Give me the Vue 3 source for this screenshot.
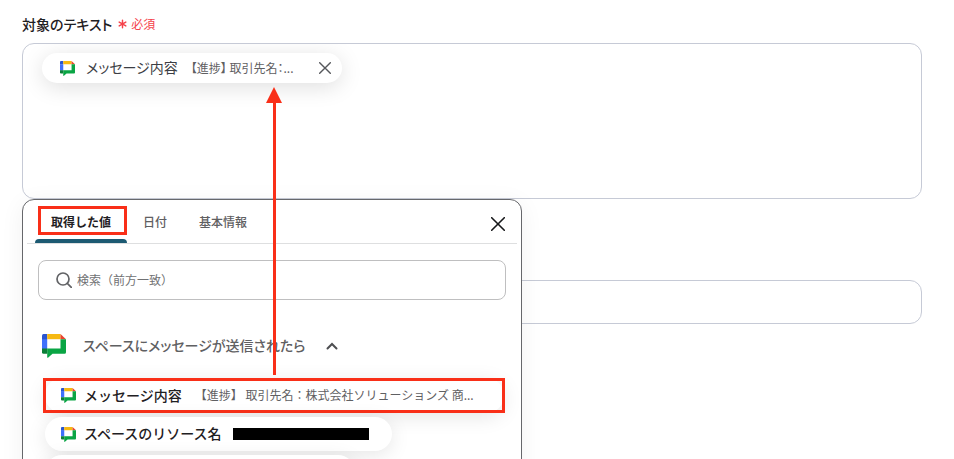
<script setup>
import { ref } from 'vue'

const tabs = ['取得した値', '日付', '基本情報']
const activeTab = ref(0)
const open = ref(true)
const search = ref('')
const body = ref('')
const other = ref('')
</script>

<template>
  <main class="page">
    <svg class="defs" width="0" height="0" aria-hidden="true">
      <symbol id="chat-logo" viewBox="0 0 24 24">
        <path fill="#3f70fb" d="M0 5h5.200v10H0Z" />
        <path fill="#2a55cf" d="M1.500 0h3.700v5.200H0V1.500Q0 0 1.500 0Z" />
        <path fill="#f6b912" d="M5.200 0H18.500v5.200H5.200Z" />
        <path fill="#e9432e" d="M18.500 0L24 5.200h-5.500Z" />
        <path fill="#0aa544" d="M18.500 5.200H24V18.300q0 1.500-1.500 1.500H10.500L6.300 23.600q-1.100.7-1.100-.7V14.600h13.300Z" />
        <path fill="#0b7f37" d="M0 14.600h5.200v5.200H1.500Q0 19.800 0 18.300Z" />
      </symbol>
    </svg>

    <section class="field">
      <label class="label" for="target">対象のテキスト<span class="required"><svg viewBox="0 0 10 10" class="star" aria-hidden="true"><path d="M5 .8v8.400M1.300 2.900l7.400 4.200M8.700 2.900L1.300 7.100" /></svg>必須</span></label>
      <div class="editor">
        <textarea id="target" v-model="body" class="editor-input"></textarea>
        <div class="chip">
          <svg class="logo"><use href="#chat-logo" /></svg>
          <span class="chip-name">メッセージ内容</span>
          <span class="chip-value">【進捗】 取引先名：...</span>
          <button class="chip-close" type="button" aria-label="削除">
            <svg viewBox="0 0 12 12"><path d="M.7.7l10.600 10.600M11.300.7L.7 11.300" /></svg>
          </button>
        </div>
      </div>

      <div class="panel">
        <nav class="tabs">
          <button
            v-for="(t, i) in tabs"
            :key="t"
            type="button"
            class="tab"
            :class="{ active: i === activeTab }"
            @click="activeTab = i"
          >{{ t }}<span v-if="i === 0" class="mark mark-tab"></span></button>
          <button class="panel-close" type="button" aria-label="閉じる">
            <svg viewBox="0 0 14 14"><path d="M.7.7l12.600 12.600M13.300.7L.7 13.300" /></svg>
          </button>
        </nav>

        <div class="search">
          <svg class="glass" viewBox="0 0 16 16"><circle cx="7" cy="7" r="6" /><path d="M11.300 11.300l4 4" /></svg>
          <input v-model="search" type="text" placeholder="検索（前方一致）" aria-label="検索">
        </div>

        <button class="group" type="button" @click="open = !open">
          <svg class="logo-large"><use href="#chat-logo" /></svg>
          <span class="group-name">スペースにメッセージが送信されたら</span>
          <svg class="chevron" viewBox="0 0 12 8"><path d="M1.500 6.500l4.500-4.500 4.500 4.500" /></svg>
        </button>

        <div v-if="open" class="values">
          <button class="value wide" type="button">
            <svg class="logo"><use href="#chat-logo" /></svg>
            <span class="value-name">メッセージ内容</span>
            <span class="value-text">【進捗】 取引先名：株式会社ソリューションズ 商...</span>
            <span class="mark mark-row"></span>
          </button>
          <button class="value" type="button">
            <svg class="logo"><use href="#chat-logo" /></svg>
            <span class="value-name">スペースのリソース名</span>
            <span class="redacted"></span>
          </button>
          <button class="value next" type="button" aria-label="次の値"></button>
        </div>
      </div>

      <div class="arrow"><span class="arrow-head"></span><span class="arrow-line"></span></div>
    </section>

    <input v-model="other" class="other" type="text" aria-label="入力">
  </main>
</template>

<style>
body {
  background: #fff;
}
</style>

<style scoped>
.page {
  box-sizing: border-box;
  height: 100vh;
  overflow: hidden;
  padding: 14px 32px 0 22px;
  font-family: "Noto Sans CJK JP", "Noto Sans", sans-serif;
  color: #1f2023;
}
.page * {
  box-sizing: border-box;
}
.defs {
  position: absolute;
}
button {
  border: 0;
  background: none;
  padding: 0;
  font: inherit;
  color: inherit;
  cursor: pointer;
}
svg path,
svg circle {
  stroke-linecap: round;
}
.field {
  position: relative;
}
.label {
  display: flex;
  align-items: center;
  height: 20px;
  margin-bottom: 9px;
  font-size: 14px;
  font-weight: 500;
  font-feature-settings: "palt";
}
.required {
  display: flex;
  align-items: center;
  gap: 4px;
  margin-left: 6px;
  padding-bottom: 2px;
  font-size: 12px;
  font-weight: 400;
  color: #f5424b;
}
.star {
  width: 9px;
  height: 10px;
  margin-top: 2px;
  fill: none;
  stroke: currentColor;
  stroke-width: 1.6;
}
.editor {
  display: grid;
  height: 156px;
  border: 1px solid #c6cad6;
  border-radius: 12px;
  overflow: hidden;
}
.editor > * {
  grid-area: 1 / 1;
}
.editor-input {
  border: 0;
  outline: 0;
  resize: none;
  background: transparent;
}
.chip {
  display: flex;
  align-items: center;
  align-self: start;
  justify-self: start;
  width: 300px;
  height: 30px;
  margin: 9px 0 0 19px;
  padding: 0 11px 0 18px;
  border-radius: 15px;
  background: #fff;
  box-shadow: 0 4px 22px rgba(0, 0, 0, 0.13);
  white-space: nowrap;
  font-feature-settings: "palt";
}
.logo {
  flex: none;
  width: 15px;
  height: 15px;
}
.chip-name,
.chip-value,
.group-name,
.value-name,
.value-text {
  padding-bottom: 2px;
}
.chip-name {
  margin-left: 11px;
  font-size: 14px;
  color: #3c3e44;
}
.chip-value {
  margin-left: 13px;
  font-size: 12px;
  color: #5f6062;
}
.chip-close {
  width: 12px;
  height: 12px;
  margin-left: auto;
}
.chip-close svg,
.panel-close svg {
  display: block;
  width: 100%;
  height: 100%;
  fill: none;
  stroke: #55575b;
  stroke-width: 1.4;
}
.panel {
  position: absolute;
  z-index: 1;
  top: 185px;
  left: 0;
  width: 500px;
  min-height: 300px;
  padding: 0 4px;
  border: 1px solid #66676b;
  border-radius: 12px;
  background: #fff;
  box-shadow: 0 4px 24px rgba(0, 0, 0, 0.06);
}
.tabs {
  display: flex;
  height: 44px;
  padding-left: 8px;
  border-bottom: 1px solid #dedfe0;
}
.tab {
  position: relative;
  padding: 4px 16px 0;
  font-size: 12px;
  font-weight: 500;
  color: #5f6062;
  border-bottom: 4px solid transparent;
}
.tab.active {
  font-weight: 700;
  color: #1f2023;
}
.tab.active::after {
  content: "";
  position: absolute;
  right: 0;
  bottom: -4px;
  left: 0;
  height: 4px;
  border-radius: 4px 4px 0 0;
  background: #1c5a72;
}
.panel-close {
  width: 14px;
  height: 14px;
  margin: 17px 12px 0 auto;
}
.panel-close svg {
  stroke: #17181a;
  stroke-width: 1.6;
}
.mark {
  position: absolute;
  border: 3px solid #f92f18;
  pointer-events: none;
}
.mark-tab {
  inset: 6px 0 4px 3px;
}
.mark-row {
  inset: 0 -1px 0 -2px;
}
.search {
  display: flex;
  align-items: center;
  gap: 5px;
  height: 40px;
  margin: 16px 11px 0;
  padding: 0 17px;
  border: 1px solid #bfbfc0;
  border-radius: 8px;
}
.glass {
  flex: none;
  width: 16px;
  height: 16px;
  fill: none;
  stroke: #626366;
  stroke-width: 1.7;
}
.search input {
  flex: 1;
  min-width: 0;
  padding: 0 0 2px;
  border: 0;
  outline: 0;
  background: transparent;
  font: inherit;
  font-size: 12px;
}
.search input::placeholder {
  color: #707173;
  opacity: 1;
}
.group {
  display: flex;
  align-items: center;
  height: 24px;
  margin: 34px 0 0 15px;
  font-size: 14px;
  font-weight: 500;
  font-feature-settings: "palt";
  color: #5f6062;
}
.logo-large {
  width: 24px;
  height: 24px;
  margin-right: 17px;
}
.chevron {
  width: 12px;
  height: 8px;
  margin-left: 20px;
  fill: none;
  stroke: #4d4e51;
  stroke-width: 2;
}
.values {
  display: flex;
  flex-direction: column;
  align-items: flex-start;
  gap: 4px;
  margin: 20px 0 0 18px;
}
.value {
  position: relative;
  display: flex;
  align-items: center;
  width: 347px;
  height: 34px;
  padding-left: 16px;
  border-radius: 17px;
  background: #fff;
  box-shadow: 0 4px 20px rgba(0, 0, 0, 0.1);
  white-space: nowrap;
}
.value.wide {
  width: 459px;
  height: 35px;
}
.value.next {
  width: 310px;
}
.value-name {
  margin-left: 8px;
  font-size: 14px;
  font-weight: 500;
}
.value-text {
  margin-left: 13px;
  font-size: 12px;
  color: #5f6062;
}
.redacted {
  width: 136px;
  height: 12px;
  margin-left: 11px;
  background: #000;
}
.arrow {
  position: absolute;
  z-index: 2;
  top: 73px;
  left: 244px;
  display: flex;
  flex-direction: column;
  align-items: center;
  width: 16px;
  height: 288px;
  pointer-events: none;
}
.arrow-head {
  width: 16px;
  height: 16px;
  background: #f92f18;
  clip-path: polygon(50% 0, 100% 100%, 0 100%);
}
.arrow-line {
  flex: 1;
  width: 3px;
  background: #f92f18;
}
.other {
  display: block;
  width: 100%;
  height: 44px;
  margin-top: 81px;
  padding: 0 16px;
  border: 1px solid #c6cad6;
  border-radius: 12px;
  outline: 0;
  background: #fff;
}
</style>
